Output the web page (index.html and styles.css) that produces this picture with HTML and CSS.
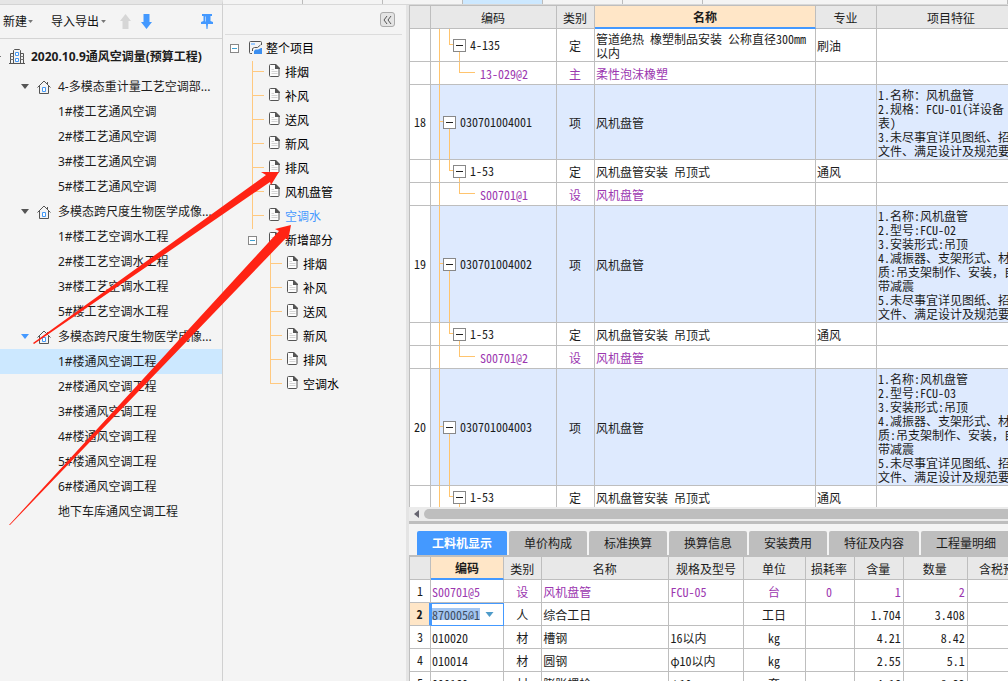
FILE: index.html
```html
<!DOCTYPE html>
<html lang="zh-CN">
<head>
<meta charset="utf-8">
<title>通风空调预算工程</title>
<link rel="stylesheet" href="styles.css">
</head>
<body>
<svg class="symbols" aria-hidden="true">
  <symbol id="house" viewBox="0 0 14 14"><path d="M.5 7.500 7 1l6.500 6.500M2.500 6v7.500h9V6M10.500 4V2" fill="none" stroke="#555"/><path d="M5.500 7.500h3v4h-3z" fill="#fff" stroke="#4499f5"/></symbol>
  <symbol id="doc" viewBox="0 0 11 13"><path d="M1.500.5h5l3.500 3.500v7.500a1 1 0 0 1-1 1h-7.500a1 1 0 0 1-1-1v-10a1 1 0 0 1 1-1z" fill="#fcfcfc" stroke="#555"/><path d="M6 0h1l4 4v1H6z" fill="#555"/><path d="M2.500 5.500H5M2.500 7.500h6M2.500 9.500h6" stroke="#d4d4d4"/></symbol>
  <symbol id="down" viewBox="0 0 8 5"><path d="M0 0h8L4 5z" fill="currentColor"/></symbol>
</svg>
<div class="app">
  <aside class="projects">
    <div class="toolbar">
      <button class="menu">新建<svg width="5" height="3"><use href="#down"/></svg></button>
      <button class="menu menu-io">导入导出<svg width="5" height="3"><use href="#down"/></svg></button>
      <button class="tool" aria-label="上移"><svg width="11" height="15"><path d="M5.500 0 11 7H8.500v8h-6V7H0z" fill="#d6d6d6"/></svg></button>
      <button class="tool" aria-label="下移"><svg width="11" height="15"><path d="M5.500 15 11 8H8.500V0h-6v8H0z" fill="#4499ff"/></svg></button>
      <button class="tool pin" aria-label="固定"><svg width="12" height="15"><path d="M1 0h10v2H9.500v5l2.500 1v2H7l-.5 5h-1L5 10H0V8l2.500-1V2H1z" fill="#4499ff"/><path d="M4.500 2.500v5" stroke="#a9d0ff"/></svg></button>
    </div>
    <ul class="project-tree">
      <li class="root"><span class="edge"></span><svg width="16" height="15"><path d="M4.500 14V1.500l1-1h5l1 1V14M4 4.500H1.500V14M12 4.500h2.500V14M0 14.500h16" fill="none" stroke="#555"/><path d="M1.500 7.500h3m-3 3h3m7-3h3m-3 3h3" stroke="#777"/><path d="M6.500 3.500h3v3h-3zM6.500 9.500h3v3h-3z" fill="#fff" stroke="#4499f5"/></svg><strong>2020.10.9通风空调量(预算工程)</strong></li>
      <li class="group"><svg class="caret"><use href="#down"/></svg><svg class="house"><use href="#house"/></svg><span>4-多模态重计量工艺空调部...</span></li>
      <li class="leaf">1#楼工艺通风空调</li>
      <li class="leaf">2#楼工艺通风空调</li>
      <li class="leaf">3#楼工艺通风空调</li>
      <li class="leaf">5#楼工艺通风空调</li>
      <li class="group"><svg class="caret"><use href="#down"/></svg><svg class="house"><use href="#house"/></svg><span>多模态跨尺度生物医学成像...</span></li>
      <li class="leaf">1#楼工艺空调水工程</li>
      <li class="leaf">2#楼工艺空调水工程</li>
      <li class="leaf">3#楼工艺空调水工程</li>
      <li class="leaf">5#楼工艺空调水工程</li>
      <li class="group current"><svg class="caret"><use href="#down"/></svg><svg class="house"><use href="#house"/></svg><span>多模态跨尺度生物医学成像...</span></li>
      <li class="leaf selected">1#楼通风空调工程</li>
      <li class="leaf">2#楼通风空调工程</li>
      <li class="leaf">3#楼通风空调工程</li>
      <li class="leaf">4#楼通风空调工程</li>
      <li class="leaf">5#楼通风空调工程</li>
      <li class="leaf">6#楼通风空调工程</li>
      <li class="leaf">地下车库通风空调工程</li>
    </ul>
  </aside>

  <div class="work">
    <nav class="strip"><span></span><span></span><span></span><span class="on"></span><span></span><span></span><span class="rest"></span></nav>
    <div class="columns">
      <section class="sections">
        <div class="sections-head"><button class="collapse" aria-label="折叠"><svg width="9" height="8"><path d="M4 0 1 4l3 4M8 0 5 4l3 4" fill="none" stroke="#555"/></svg></button></div>
        <ul class="section-tree">
          <li><button class="fold" aria-label="折叠整个项目"></button><svg class="whole" width="13" height="13"><path d="M12.500 4V1.500a1 1 0 0 0-1-1h-10a1 1 0 0 0-1 1v10a1 1 0 0 0 1 1H3" fill="none" stroke="#555"/><path d="M2 2h4v2H2z" fill="#9ccbff"/><path d="M3.500 10V7.500l2-1h3l3-2.500" fill="none" stroke="#555"/><path d="M5 13v-3l1.500-1.500H9L12 7h1v6z" fill="#3c8ff0"/></svg>整个项目
            <ul class="level one">
              <li><svg class="doc"><use href="#doc"/></svg>排烟</li>
              <li><svg class="doc"><use href="#doc"/></svg>补风</li>
              <li><svg class="doc"><use href="#doc"/></svg>送风</li>
              <li><svg class="doc"><use href="#doc"/></svg>新风</li>
              <li><svg class="doc"><use href="#doc"/></svg>排风</li>
              <li><svg class="doc"><use href="#doc"/></svg>风机盘管</li>
              <li class="active"><svg class="doc"><use href="#doc"/></svg>空调水</li>
            </ul>
          </li>
          <li class="added"><button class="fold" aria-label="折叠新增部分"></button><svg class="doc"><use href="#doc"/></svg>新增部分
            <ul class="level two">
              <li><svg class="doc"><use href="#doc"/></svg>排烟</li>
              <li><svg class="doc"><use href="#doc"/></svg>补风</li>
              <li><svg class="doc"><use href="#doc"/></svg>送风</li>
              <li><svg class="doc"><use href="#doc"/></svg>新风</li>
              <li><svg class="doc"><use href="#doc"/></svg>排风</li>
              <li><svg class="doc"><use href="#doc"/></svg>空调水</li>
            </ul>
          </li>
        </ul>
      </section>

      <main class="sheets">
        <div class="bill">
          <table class="grid">
            <colgroup><col class="w-no"><col class="w-code"><col class="w-kind"><col class="w-name"><col class="w-major"><col class="w-feature"></colgroup>
            <thead><tr><th></th><th>编码</th><th>类别</th><th class="sorted">名称</th><th>专业</th><th>项目特征</th></tr></thead>
            <tbody>
              <tr class="tall"><td></td><td class="sub"><div class="code"><button class="box" aria-label="折叠"></button><span>4-135</span></div></td><td class="c">定</td><td>管道绝热 橡塑制品安装 公称直径300mm<br>以内</td><td>刷油</td><td></td></tr>
              <tr class="material"><td></td><td class="end"><span>13-029@2</span></td><td class="c">主</td><td>柔性泡沫橡塑</td><td></td><td></td></tr>
              <tr class="item short"><td class="c">18</td><td class="top"><div class="code"><button class="box" aria-label="折叠"></button><span>030701004001</span></div></td><td class="c">项</td><td>风机盘管</td><td></td><td>1.名称：风机盘管<br>2.规格：FCU-01(详设备<br>表)<br>3.未尽事宜详见图纸、招标<br>文件、满足设计及规范要求</td></tr>
              <tr><td></td><td class="sub"><div class="code"><button class="box" aria-label="折叠"></button><span>1-53</span></div></td><td class="c">定</td><td>风机盘管安装 吊顶式</td><td>通风</td><td></td></tr>
              <tr class="material"><td></td><td class="end"><span>S00701@1</span></td><td class="c">设</td><td>风机盘管</td><td></td><td></td></tr>
              <tr class="item"><td class="c">19</td><td class="top"><div class="code"><button class="box" aria-label="折叠"></button><span>030701004002</span></div></td><td class="c">项</td><td>风机盘管</td><td></td><td>1.名称:风机盘管<br>2.型号:FCU-02<br>3.安装形式:吊顶<br>4.减振器、支架形式、材<br>质:吊支架制作、安装，自<br>带减震<br>5.未尽事宜详见图纸、招标<br>文件、满足设计及规范要求</td></tr>
              <tr><td></td><td class="sub"><div class="code"><button class="box" aria-label="折叠"></button><span>1-53</span></div></td><td class="c">定</td><td>风机盘管安装 吊顶式</td><td>通风</td><td></td></tr>
              <tr class="material"><td></td><td class="end"><span>S00701@2</span></td><td class="c">设</td><td>风机盘管</td><td></td><td></td></tr>
              <tr class="item"><td class="c">20</td><td class="top"><div class="code"><button class="box" aria-label="折叠"></button><span>030701004003</span></div></td><td class="c">项</td><td>风机盘管</td><td></td><td>1.名称:风机盘管<br>2.型号:FCU-03<br>3.安装形式:吊顶<br>4.减振器、支架形式、材<br>质:吊支架制作、安装，自<br>带减震<br>5.未尽事宜详见图纸、招标<br>文件、满足设计及规范要求</td></tr>
              <tr><td></td><td class="sub"><div class="code"><button class="box" aria-label="折叠"></button><span>1-53</span></div></td><td class="c">定</td><td>风机盘管安装 吊顶式</td><td>通风</td><td></td></tr>
            </tbody>
          </table>
        </div>
        <div class="scroll"><svg width="5" height="8"><path d="M5 0v8L0 4z" fill="#666570"/></svg><span class="thumb"></span></div>
        <div class="detail">
          <div class="tabs"><button class="tab wide on">工料机显示</button><button class="tab">单价构成</button><button class="tab">标准换算</button><button class="tab">换算信息</button><button class="tab">安装费用</button><button class="tab wide">特征及内容</button><button class="tab wide">工程量明细</button></div>
          <table class="grid resources">
            <colgroup><col class="w-no"><col class="r-code"><col class="w-kind"><col class="r-name"><col class="r-spec"><col class="r-unit"><col class="r-loss"><col class="r-loss"><col class="r-count"><col class="r-price"></colgroup>
            <thead><tr><th></th><th class="sorted">编码</th><th>类别</th><th>名称</th><th>规格及型号</th><th>单位</th><th>损耗率</th><th>含量</th><th>数量</th><th>含税预算价</th></tr></thead>
            <tbody>
              <tr class="material"><td class="c no">1</td><td>S00701@5</td><td class="c">设</td><td>风机盘管</td><td>FCU-05</td><td class="c">台</td><td class="c">0</td><td class="n">1</td><td class="n">2</td><td></td></tr>
              <tr><td class="c picked">2</td><td class="editing"><div class="editor"><input value="870005@1" aria-label="编码"><button aria-label="选择编码"><svg width="9" height="5"><use href="#down"/></svg></button></div></td><td class="c">人</td><td>综合工日</td><td></td><td class="c">工日</td><td></td><td class="n">1.704</td><td class="n">3.408</td><td></td></tr>
              <tr><td class="c">3</td><td>010020</td><td class="c">材</td><td>槽钢</td><td>16以内</td><td class="c">kg</td><td></td><td class="n">4.21</td><td class="n">8.42</td><td></td></tr>
              <tr><td class="c">4</td><td>010014</td><td class="c">材</td><td>圆钢</td><td>φ10以内</td><td class="c">kg</td><td></td><td class="n">2.55</td><td class="n">5.1</td><td></td></tr>
              <tr><td class="c">5</td><td>090160</td><td class="c">材</td><td>膨胀螺栓</td><td>φ10</td><td class="c">套</td><td></td><td class="n">4.16</td><td class="n">8.32</td><td></td></tr>
            </tbody>
          </table>
        </div>
      </main>
    </div>
  </div>
</div>
<svg class="marks" width="300" height="530" aria-hidden="true"><path d="M33 343 266 175 261 172 279 172 271 185 270 182 34 344zM9 525 279 231 275 229 291 225 288 241 286 238 10 525z" fill="#ff2314"/></svg>
</body>
</html>
```
FILE: styles.css
```css
* { box-sizing: border-box; }
body {
  margin: 0;
  background: #f4f4f4;
  color: #1c1c1c;
  font: 12px/14px "Noto Sans", "Noto Sans CJK SC", sans-serif;
  overflow: hidden;
}
ul { list-style: none; margin: 0; padding: 0; }
button { font: inherit; color: inherit; border: 0; background: none; padding: 0; }
svg { flex: none; }
.symbols { position: absolute; width: 0; height: 0; }
.app { display: flex; height: 100vh; }

.projects {
  flex: 0 0 223px;
  border-top: 4px solid #e6e6e6;
  border-right: 1px solid #d0d0d0;
  white-space: nowrap;
  overflow: hidden;
}
.toolbar {
  display: flex;
  align-items: center;
  gap: 10px;
  height: 35px;
  padding: 0 9px 0 3px;
  border-top: 1px solid #d4d4d4;
  border-bottom: 1px solid #d4d4d4;
}
.menu { display: flex; align-items: center; gap: 1px; color: #111; }
.menu svg { color: #777; }
.menu-io { margin: 0 4px 0 8px; }
.menu-io svg { margin-left: 1px; }
.tool { display: flex; }
.pin { margin-left: auto; }
.project-tree li { display: flex; align-items: center; height: 25px; }
.project-tree .root { height: 35px; gap: 6px; }
.edge { width: 3px; height: 1px; background: linear-gradient(90deg, #777 1px, transparent 1px); }
.project-tree .leaf { padding-left: 58px; }
.project-tree .group { padding-left: 21px; }
.caret { width: 8px; height: 5px; margin-right: 8px; color: #555; }
.house { width: 14px; height: 14px; margin-right: 7px; }
.current .caret { color: #4499ff; }
.project-tree .selected { background: #cce8ff; }

.work { flex: 1; min-width: 0; display: flex; flex-direction: column; }
.strip { display: flex; flex: none; height: 5px; border-bottom: 1px solid #d8d8d8; }
.strip span { width: 80px; border-right: 1px solid #bbb; }
.strip .on { background: #cce8ff; }
.strip .rest { flex: 1; }
.columns { flex: 1; min-height: 0; display: flex; }

.sections { flex: 0 0 186px; border-right: 3px solid #e4e4e4; color: #000; }
.sections-head { display: flex; justify-content: flex-end; height: 30px; margin: 0 4px 0 2px; padding: 7px 7px 0 0; border-bottom: 1px solid #dcdcdc; }
.collapse { display: grid; place-items: center; width: 15px; height: 15px; border: 1px solid #aaa; border-radius: 3px; background: #e4e4e4; }
.section-tree { padding: 2px 0 0 7px; line-height: 24px; }
.fold { width: 9px; height: 9px; margin-right: 10px; border: 1px solid #888; background: linear-gradient(#3c9fd0, #3c9fd0) center / 5px 1px no-repeat #fff; vertical-align: 1px; }
.whole { margin-right: 4px; vertical-align: -1px; }
.doc { width: 11px; height: 13px; margin-right: 5px; vertical-align: 0; }
.level li { height: 24px; padding-left: 17px; background: linear-gradient(#ffc980, #ffc980) 0 10px / 12px 1px no-repeat, linear-gradient(#ffc980, #ffc980) 0 0 / 1px 100% no-repeat; }
.one, .two { margin-left: 22px; }
.two li:last-child { background-size: 12px 1px, 1px 10px; }
.level .active { color: #4499ff; }
.added { padding-left: 18px; }
.added > .fold { margin-right: 12px; }

.sheets { flex: 1; min-width: 0; display: flex; flex-direction: column; }
.bill { flex: 1; min-height: 0; overflow: hidden; background: #fff; }
.grid { table-layout: fixed; width: 618px; border-collapse: separate; border-spacing: 0; border-left: 1px solid #bebebe; border-top: 1px solid #bebebe; font-family: "Noto Sans Mono CJK SC", "Noto Sans CJK SC", "Liberation Mono", monospace; white-space: nowrap; background: #fff; }
.grid th, .grid td { height: 23px; padding: 1px 2px 0 1px; border-right: 1px solid #bebebe; border-bottom: 1px solid #bebebe; text-align: left; overflow: hidden; }
.grid th { text-align: center; font-weight: 400; background: #e8e8e8; }
.grid .sorted { background: #ffe6c7; border-bottom: 2px solid #4499ff; font-weight: 700; padding: 0; }
.grid .c { text-align: center; }
.grid .n { text-align: right; }
.w-no { width: 21px; }
.w-code { width: 126px; }
.w-kind { width: 38px; }
.w-name { width: 221px; }
.w-major { width: 61px; }
.w-feature { width: 150px; }
.grid .tall td { height: 33px; }
.grid .item td { height: 117px; }
.grid .short td { height: 75px; }
.item td:not(:first-child) { background-color: #deeafe; }
.material td { color: #9c37b0; }
.grid .material .no { color: #1c1c1c; }
.grid td:first-child { padding: 0; }

/* Branch guides: --mid is the height of the row's connector */
.grid tr { --mid: 10px; }
.grid .tall { --mid: 15px; }
.grid .item { --mid: 57px; }
.grid .short { --mid: 36px; }
.grid td.top, .grid td.sub, .grid td.end {
  --line: linear-gradient(#ffc46e, #ffc46e);
  background-repeat: no-repeat;
  background-image: var(--line), var(--line), var(--line);
}
.grid td.top { padding: 0 0 0 12px; background-position: 8px 0, 18px var(--mid), 8px var(--mid); background-size: 1px 100%, 1px 100%, 4px 1px; }
.grid td.sub { padding: 0 0 0 22px; background-image: var(--line), var(--line), var(--line), var(--line); background-position: 8px 0, 18px 0, 18px var(--mid), 28px var(--mid); background-size: 1px 100%, 1px var(--mid), 4px 1px, 1px 100%; }
.grid td.end { padding: 1px 0 0 49px; background-position: 8px 0, 28px 0, 28px var(--mid); background-size: 1px 100%, 1px var(--mid), 16px 1px; }
.code { display: flex; align-items: center; gap: 4px; }
.box { width: 13px; height: 13px; border: 1px solid #888; background: linear-gradient(#222, #222) center / 7px 1px no-repeat #fff; }

.scroll { flex: none; display: flex; align-items: center; gap: 5px; height: 14px; padding-left: 5px; background: #ebebeb; }
.thumb { flex: 1; height: 10px; border-radius: 5px 0 0 5px; background: #bebebe; }
.detail { flex: 0 0 160px; border-top: 3px solid #bebebe; overflow: hidden; }
.tabs { display: flex; gap: 2px; padding: 7px 0 0 8px; border-bottom: 2px solid #bebebe; }
.tab { flex: none; width: 78px; height: 24px; padding-top: 2px; border-radius: 2px 2px 0 0; background: #bebebe; }
.tab.wide { width: 90px; }
.tab.on { background: #4499ff; color: #fff; font-weight: 700; }
.resources { width: 643px; border-top: 0; }
.r-code { width: 73px; }
.r-name { width: 127px; }
.r-spec { width: 75px; }
.r-unit { width: 61px; }
.r-loss { width: 49px; }
.r-count { width: 64px; }
.r-price { width: 84px; }
.grid td.picked { background: #ffe6c7; border-right: 2px solid #4499ff; font-weight: 700; }
.grid td.editing { padding: 0; outline: 1px solid #4499ff; outline-offset: -1px; }
.editor { display: flex; align-items: center; gap: 5px; padding-left: 1px; }
.editor input { width: 48px; height: 12px; padding: 0; border: 0; background: #a3c6f2; color: #3d4c60; font: inherit; line-height: 12px; }
.editor button { display: flex; color: #4e9bc9; }

.marks { position: absolute; left: 0; top: 0; pointer-events: none; }
```
